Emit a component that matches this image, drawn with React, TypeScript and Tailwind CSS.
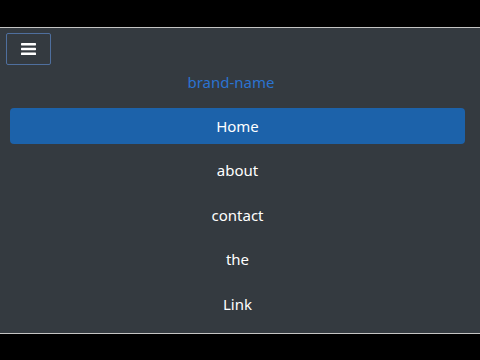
const links = ["about", "contact", "the", "Link"];

export default function App() {
  return (
    <div
      className="w-[480px] h-[360px] bg-black flex flex-col"
      style={{ fontFamily: '"Noto Sans", "Open Sans", sans-serif' }}
    >
      <div className="h-[27px] shrink-0" />
      <div className="h-[307px] shrink-0 bg-[#343a40] border-y border-[#c4c4c4] pt-[5px]">
        <button className="ml-[6px] w-[45px] h-[32px] border border-[#4f6f9e] rounded-[2px] flex items-center justify-center">
          <svg width="15" height="12" viewBox="0 0 15 12">
            <rect x="0" y="0" width="15" height="2.4" rx="0.6" fill="#fff" />
            <rect x="0" y="4.8" width="15" height="2.4" rx="0.6" fill="#fff" />
            <rect x="0" y="9.6" width="15" height="2.4" rx="0.6" fill="#fff" />
          </svg>
        </button>
        <div className="mt-[5px] h-[24px] leading-[24px] text-center text-[15px] text-[#2b73d1] pr-[18px]">
          brand-name
        </div>
        <ul className="mt-[14px] ml-[10px] mr-[15px] flex flex-col gap-[8.5px]">
          <li className="h-[36px] rounded-[4px] bg-[#1c62aa] text-white text-[15px] flex items-center justify-center">
            Home
          </li>
          {links.map((l) => (
            <li
              key={l}
              className="h-[36px] text-white text-[15px] flex items-center justify-center"
            >
              {l}
            </li>
          ))}
        </ul>
      </div>
    </div>
  );
}
